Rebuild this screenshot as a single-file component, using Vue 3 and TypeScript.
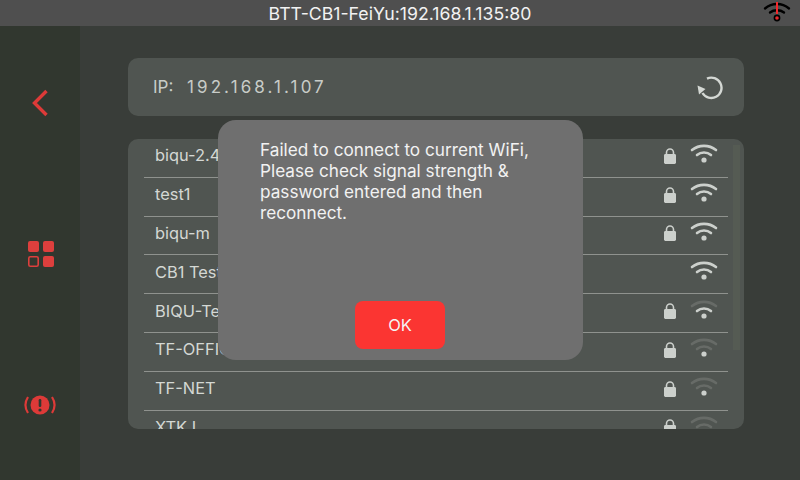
<template>
  <div class="screen">
    <header class="topbar">
      <span class="topbar__title">BTT-CB1-FeiYu:192.168.1.135:80</span>
      <svg class="topbar__wifi" width="28" height="22" viewBox="0 0 28 22" fill="none">
        <path d="M2 8.5 C9 2.5 19 2.5 26 8.5" stroke="#000" stroke-width="2.4" stroke-linecap="round" />
        <path d="M7 12.5 C11 9.5 17 9.5 21 12.5" stroke="#000" stroke-width="2.4" stroke-linecap="round" />
        <circle cx="14" cy="18" r="2.6" fill="#e8292c" stroke="#000" stroke-width="1.6" />
        <rect x="13" y="2" width="2" height="12" fill="#f4282c" />
      </svg>
    </header>

    <div class="body">
      <aside class="sidebar">
        <svg class="sidebar__icon" width="22" height="30" viewBox="0 0 22 30" fill="none">
          <path d="M17.5 3 L5.5 15 L17.5 27" stroke="#dd3a38" stroke-width="3.4" />
        </svg>
        <svg class="sidebar__icon sidebar__icon--grid" width="30" height="30" viewBox="0 0 30 30">
          <rect x="2" y="2" width="11" height="11" rx="2" fill="#dd3f3d" />
          <rect x="17" y="2" width="11" height="11" rx="2" fill="#dd3f3d" />
          <rect x="2.8" y="17.8" width="9.4" height="9.4" rx="1.5" fill="none" stroke="#dd3f3d" stroke-width="1.6" />
          <rect x="17" y="17" width="11" height="11" rx="2" fill="#dd3f3d" />
        </svg>
        <svg class="sidebar__icon sidebar__icon--warn" width="32" height="24" viewBox="0 0 32 24" fill="none">
          <circle cx="16" cy="12" r="9.5" fill="#dd3a38" />
          <rect x="14.7" y="6" width="2.6" height="8" rx="1.2" fill="#31372f" />
          <circle cx="16" cy="17" r="1.6" fill="#31372f" />
          <path d="M4 4 C0.8 9 0.8 15 4 20" stroke="#dd3a38" stroke-width="2.2" />
          <path d="M28 4 C31.2 9 31.2 15 28 20" stroke="#dd3a38" stroke-width="2.2" />
        </svg>
      </aside>

      <main class="main">
        <section class="ip">
          <span class="ip__label">IP:</span>
          <span class="ip__value">192.168.1.107</span>
          <svg width="28" height="26" viewBox="0 0 28 26" fill="none">
            <path d="M7.5 19 A10.2 10.2 0 1 0 12 4.6" stroke="#d4d8d4" stroke-width="2.4" />
            <path d="M2.5 11.5 L10.5 15 L4 20.5 Z" fill="#d4d8d4" />
          </svg>
        </section>

        <section class="list">
          <div v-for="net in networks" :key="net.name" class="row">
            <span class="row__name">{{ net.name }}</span>
            <svg v-if="net.locked" class="row__lock" width="14" height="18" viewBox="0 0 14 18" fill="none">
              <path d="M3.5 8 V5.5 A3.5 3.5 0 0 1 10.5 5.5 V8" stroke="#ccd0cc" stroke-width="1.6" />
              <rect x="1" y="7" width="12" height="10" rx="1.4" fill="#ccd0cc" />
            </svg>
            <svg class="row__wifi" width="28" height="20" viewBox="0 0 28 20" fill="none">
              <path d="M2 7 C9 1.5 19 1.5 26 7" :stroke="net.bars >= 3 ? on : off" stroke-width="2.6" stroke-linecap="round" />
              <path d="M7 12 C11 8.6 17 8.6 21 12" :stroke="net.bars >= 2 ? on : off" stroke-width="2.6" stroke-linecap="round" />
              <circle cx="14" cy="17" r="2.6" :fill="on" />
            </svg>
          </div>
          <div class="list__scroll" />
        </section>
      </main>
    </div>

    <div class="modal">
      <p class="modal__text">
        Failed to connect to current WiFi,<br>
        Please check signal strength &amp;<br>
        password entered and then<br>
        reconnect.
      </p>
      <button class="modal__btn">OK</button>
    </div>
  </div>
</template>

<script setup lang="ts">
interface Network {
  name: string
  locked: boolean
  bars: number
}

const on = '#ccd0cc'
const off = '#676b67'

const networks: Network[] = [
  { name: 'biqu-2.4', locked: true, bars: 3 },
  { name: 'test1', locked: true, bars: 3 },
  { name: 'biqu-m', locked: true, bars: 3 },
  { name: 'CB1 Test', locked: false, bars: 3 },
  { name: 'BIQU-Test', locked: true, bars: 2 },
  { name: 'TF-OFFICE', locked: true, bars: 1 },
  { name: 'TF-NET', locked: true, bars: 1 },
  { name: 'XTK I', locked: true, bars: 1 },
]
</script>

<style scoped>
.screen {
  position: relative;
  width: 800px;
  height: 480px;
  overflow: hidden;
  display: flex;
  flex-direction: column;
  background: #393d39;
  font-family: Inter, 'Noto Sans', sans-serif;
  color: #d4d8d4;
}

.topbar {
  position: relative;
  height: 26px;
  flex: none;
  display: flex;
  align-items: center;
  justify-content: center;
  background: #4f4f4f;
}

.topbar__title {
  font-size: 17.7px;
  color: #f2f2f2;
}

.topbar__wifi {
  position: absolute;
  right: 9px;
  top: 0;
}

.body {
  flex: 1;
  display: flex;
  min-height: 0;
}

.sidebar {
  width: 80px;
  flex: none;
  background: #31372f;
  display: flex;
  flex-direction: column;
  align-items: center;
  padding-top: 62px;
  gap: 122px;
}

.sidebar__icon--grid {
  margin: -1px 0 0 1px;
}

.sidebar__icon--warn {
  margin-top: 2px;
}

.main {
  flex: 1;
  padding: 32px 56px 0 48px;
  min-width: 0;
}

.ip {
  height: 58px;
  display: flex;
  align-items: center;
  padding: 0 21px 0 25px;
  background: #505551;
  border-radius: 10px;
  font-size: 17px;
  color: #c8ccc8;
}

.ip__label {
  width: 34px;
}

.ip__value {
  flex: 1;
  letter-spacing: 3.1px;
}

.list {
  position: relative;
  height: 290px;
  margin-top: 23px;
  padding: 0 16px;
  overflow: hidden;
  background: #505551;
  border-radius: 10px;
}

.row {
  height: 38.8px;
  box-sizing: border-box;
  display: flex;
  align-items: center;
  padding: 0 10px 5px 11px;
  border-bottom: 1px solid #8f928e;
}

.row__name {
  flex: 1;
  font-size: 16.4px;
  color: #d4d8d4;
}

.row__lock {
  margin: 1px 13px 0 0;
}

.row__wifi {
  margin-bottom: 4px;
}

.list__scroll {
  position: absolute;
  right: 4px;
  top: 6px;
  width: 7px;
  height: 205px;
  background: #555b53;
}

.modal {
  position: absolute;
  left: 218px;
  top: 120px;
  width: 365px;
  height: 240px;
  box-sizing: border-box;
  padding: 19px 42px 0;
  background: #6f6f6f;
  border-radius: 18px;
  display: flex;
  flex-direction: column;
}

.modal__text {
  margin: 0;
  font-size: 17.2px;
  line-height: 21px;
  color: #f2f2f2;
}

.modal__btn {
  position: absolute;
  left: 137px;
  top: 181px;
  width: 90px;
  height: 48px;
  border: 0;
  border-radius: 8px;
  background: #fb3532;
  color: #f4f4f4;
  font-family: inherit;
  font-size: 16.5px;
}
</style>
